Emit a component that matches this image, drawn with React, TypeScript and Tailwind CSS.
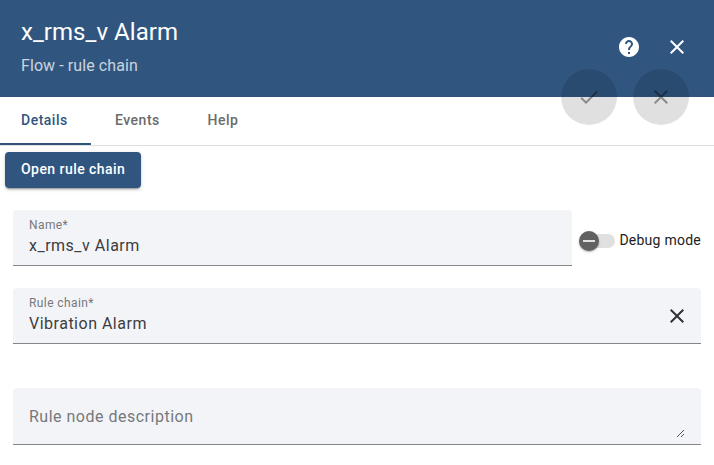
import React from 'react';

const CLOSE = 'M19 6.41L17.59 5 12 10.59 6.41 5 5 6.41 10.59 12 5 17.59 6.41 19 12 13.41 17.59 19 19 17.59 13.41 12 19 6.41z';
const CHECK = 'M9 16.17L4.83 12l-1.42 1.41L9 19 21 7l-1.41-1.41L9 16.17z';
const HELP =
  'M12 2C6.48 2 2 6.48 2 12s4.48 10 10 10 10-4.48 10-10S17.52 2 12 2zm1 17h-2v-2h2v2zm2.07-7.75l-.9.92C13.45 12.9 13 13.5 13 15h-2v-.5c0-1.1.45-2.1 1.17-2.83l1.24-1.26c.37-.36.59-.86.59-1.41 0-1.1-.9-2-2-2s-2 .9-2 2H8c0-2.21 1.79-4 4-4s4 1.79 4 4c0 .88-.36 1.68-.93 2.25z';

function Icon({ d, className = '' }: { d: string; className?: string }) {
  return (
    <svg viewBox="0 0 24 24" className={`size-6 shrink-0 fill-current ${className}`}>
      <path d={d} />
    </svg>
  );
}

function Field({ label, value, className = '', children }: { label: string; value: string; className?: string; children?: React.ReactNode }) {
  return (
    <div className={`flex h-14 items-center rounded-t border-b border-[#85868a] bg-[#f3f4f8] pr-3 pl-4 ${className}`}>
      <div className="flex-1">
        <div className="text-[12px] leading-4 tracking-[0.4px] text-[#77787b]">{label}</div>
        <div className="mt-px text-[16px] leading-6 tracking-[0.5px] text-[#3c3d3f]">{value}</div>
      </div>
      {children}
    </div>
  );
}

export default function App() {
  return (
    <div className="h-[465px] w-[714px] overflow-hidden bg-white font-[Roboto,sans-serif]">
      <header className="relative flex h-[97px] justify-between bg-[#305680] text-white">
        <div className="pt-4 pl-[21px]">
          <h1 className="text-[24px] leading-8 font-normal tracking-[0.05px]">x_rms_v Alarm</h1>
          <p className="mt-2 text-[16px] leading-5 tracking-[0.08px] text-white/75">Flow - rule chain</p>
        </div>
        <div className="flex gap-6 pt-[35px] pr-[25px]">
          <Icon d={HELP} />
          <Icon d={CLOSE} />
        </div>
        <div className="absolute top-[69px] right-[25px] flex gap-4 text-black/38">
          <button className="flex size-14 items-center justify-center rounded-full bg-black/12">
            <Icon d={CHECK} />
          </button>
          <button className="flex size-14 items-center justify-center rounded-full bg-black/12">
            <Icon d={CLOSE} />
          </button>
        </div>
      </header>

      <nav className="flex h-[49px] border-b border-[#dfdfdf] text-[14px] font-medium tracking-[0.5px] text-[#6b6b6b]">
        <div className="flex w-[91px] items-center border-b-2 border-[#305680] pl-[21px] text-[#305680]">Details</div>
        <div className="flex w-[92px] items-center border-b-2 border-transparent pl-6">Events</div>
        <div className="flex items-center border-b-2 border-transparent pl-[24.5px]">Help</div>
      </nav>

      <div className="pt-1.5 pl-[5px]">
        <button className="flex h-9 w-[136px] items-center rounded bg-[#305680] pb-0.5 pl-4 text-[14px] font-medium tracking-[0.45px] whitespace-nowrap text-white shadow-[0_3px_1px_-2px_rgba(0,0,0,0.2),0_2px_2px_rgba(0,0,0,0.14),0_1px_5px_rgba(0,0,0,0.12)]">
          Open rule chain
        </button>
      </div>

      <div className="flex flex-col px-[13px] pt-[22px]">
        <div className="flex items-center">
          <Field label="Name*" value="x_rms_v Alarm" className="w-[559px]" />
          <div className="ml-[7px] flex items-center pt-1">
            <div className="mt-px flex h-5 w-9 items-center">
              <div className="z-10 flex size-5 shrink-0 items-center justify-center rounded-full bg-[#616161] shadow-[0_1px_2px_rgba(0,0,0,0.35)]">
                <div className="h-0.5 w-3 bg-[#e0e0e0]" />
              </div>
              <div className="-ml-4 h-3.5 w-8 shrink-0 rounded-full bg-[#e0e0e0]" />
            </div>
            <span className="ml-[4.5px] text-[14px] leading-5 tracking-[0.25px] whitespace-nowrap text-[#212121]">Debug mode</span>
          </div>
        </div>

        <Field label="Rule chain*" value="Vibration Alarm" className="mt-[22px]">
          <Icon d={CLOSE} className="text-[#303134]" />
        </Field>

        <div className="mt-11 flex h-[57px] items-center justify-between rounded-t border-b border-[#85868a] bg-[#f3f4f8] pr-4 pl-4">
          <span className="pt-0.5 text-[16px] leading-6 tracking-[0.5px] text-[#77787b]">Rule node description</span>
          <svg viewBox="0 0 8 8" className="mt-[34px] size-2" fill="none" stroke="#555" shapeRendering="crispEdges">
            <path d="M0 7.5h1M1 6.5h1M2 5.5h1M3 4.5h1M4 3.5h1M5 2.5h1M6 1.5h1M4 7.5h1M5 6.5h1M6 5.5h1" />
          </svg>
        </div>
      </div>
    </div>
  );
}
